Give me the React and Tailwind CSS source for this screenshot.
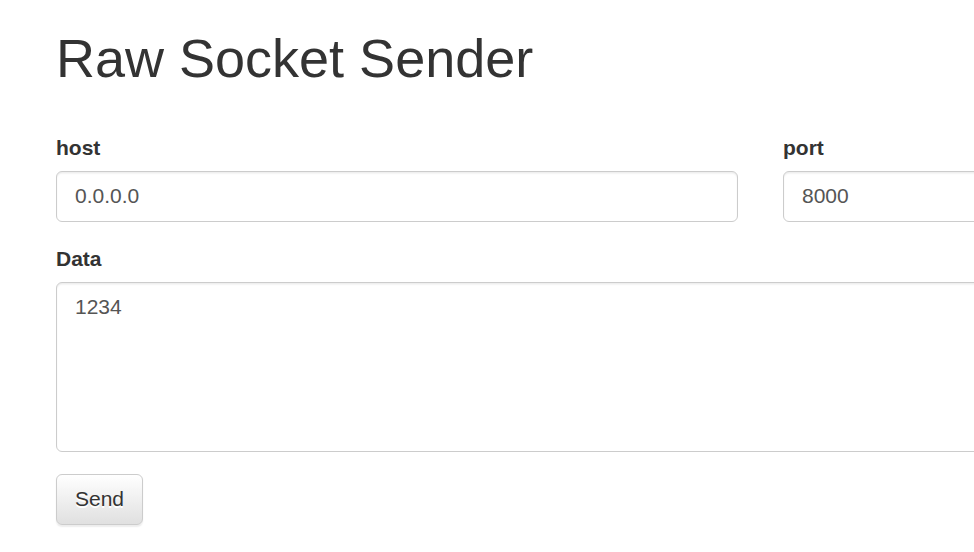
import React from 'react';

const App = () => {
  return (
    <div className="w-[974px] h-[552px] overflow-hidden bg-white font-['Liberation_Sans',Arial,sans-serif] text-[#333] leading-[1.42857]">
      <div className="w-[1300px] pl-[56px]">
        {/* Titre */}
        <h1 className="mt-[29px] text-[54px] leading-[1.1] font-normal">Raw Socket Sender</h1>

        <form className="mt-[45px]" onSubmit={(e) => e.preventDefault()}>
          <div className="flex gap-[45px]">
            <div className="w-[682px] mb-[22.5px]">
              <label className="block text-[21px] font-bold mb-[7.5px]">host</label>
              <input
                type="text"
                defaultValue="0.0.0.0"
                className="block w-full h-[51px] px-[18px] py-[9px] text-[21px] text-[#555] bg-white border border-[#ccc] rounded-[6px] shadow-[inset_0_1.5px_1.5px_rgba(0,0,0,0.075)] outline-none"
              />
            </div>
            <div className="w-[400px] mb-[22.5px]">
              <label className="block text-[21px] font-bold mb-[7.5px]">port</label>
              <input
                type="text"
                defaultValue="8000"
                className="block w-full h-[51px] px-[18px] py-[9px] text-[21px] text-[#555] bg-white border border-[#ccc] rounded-[6px] shadow-[inset_0_1.5px_1.5px_rgba(0,0,0,0.075)] outline-none"
              />
            </div>
          </div>

          <div className="mb-[22px]">
            <label className="block text-[21px] font-bold mb-[7.5px]">Data</label>
            <textarea
              defaultValue="1234"
              className="block w-[1127px] h-[170px] px-[18px] py-[9px] text-[21px] leading-[30px] text-[#555] bg-white border border-[#ccc] rounded-[6px] shadow-[inset_0_1.5px_1.5px_rgba(0,0,0,0.075)] outline-none resize-none"
            />
          </div>

          <button
            type="submit"
            className="h-[51px] px-[18px] text-[21px] text-[#333] border border-[#ccc] rounded-[6px] bg-[linear-gradient(to_bottom,#fff_0%,#e0e0e0_100%)] [text-shadow:0_1.5px_0_#fff] shadow-[inset_0_1.5px_0_rgba(255,255,255,0.15),0_1.5px_1.5px_rgba(0,0,0,0.075)]"
          >
            Send
          </button>
        </form>
      </div>
    </div>
  );
};

export default App;
